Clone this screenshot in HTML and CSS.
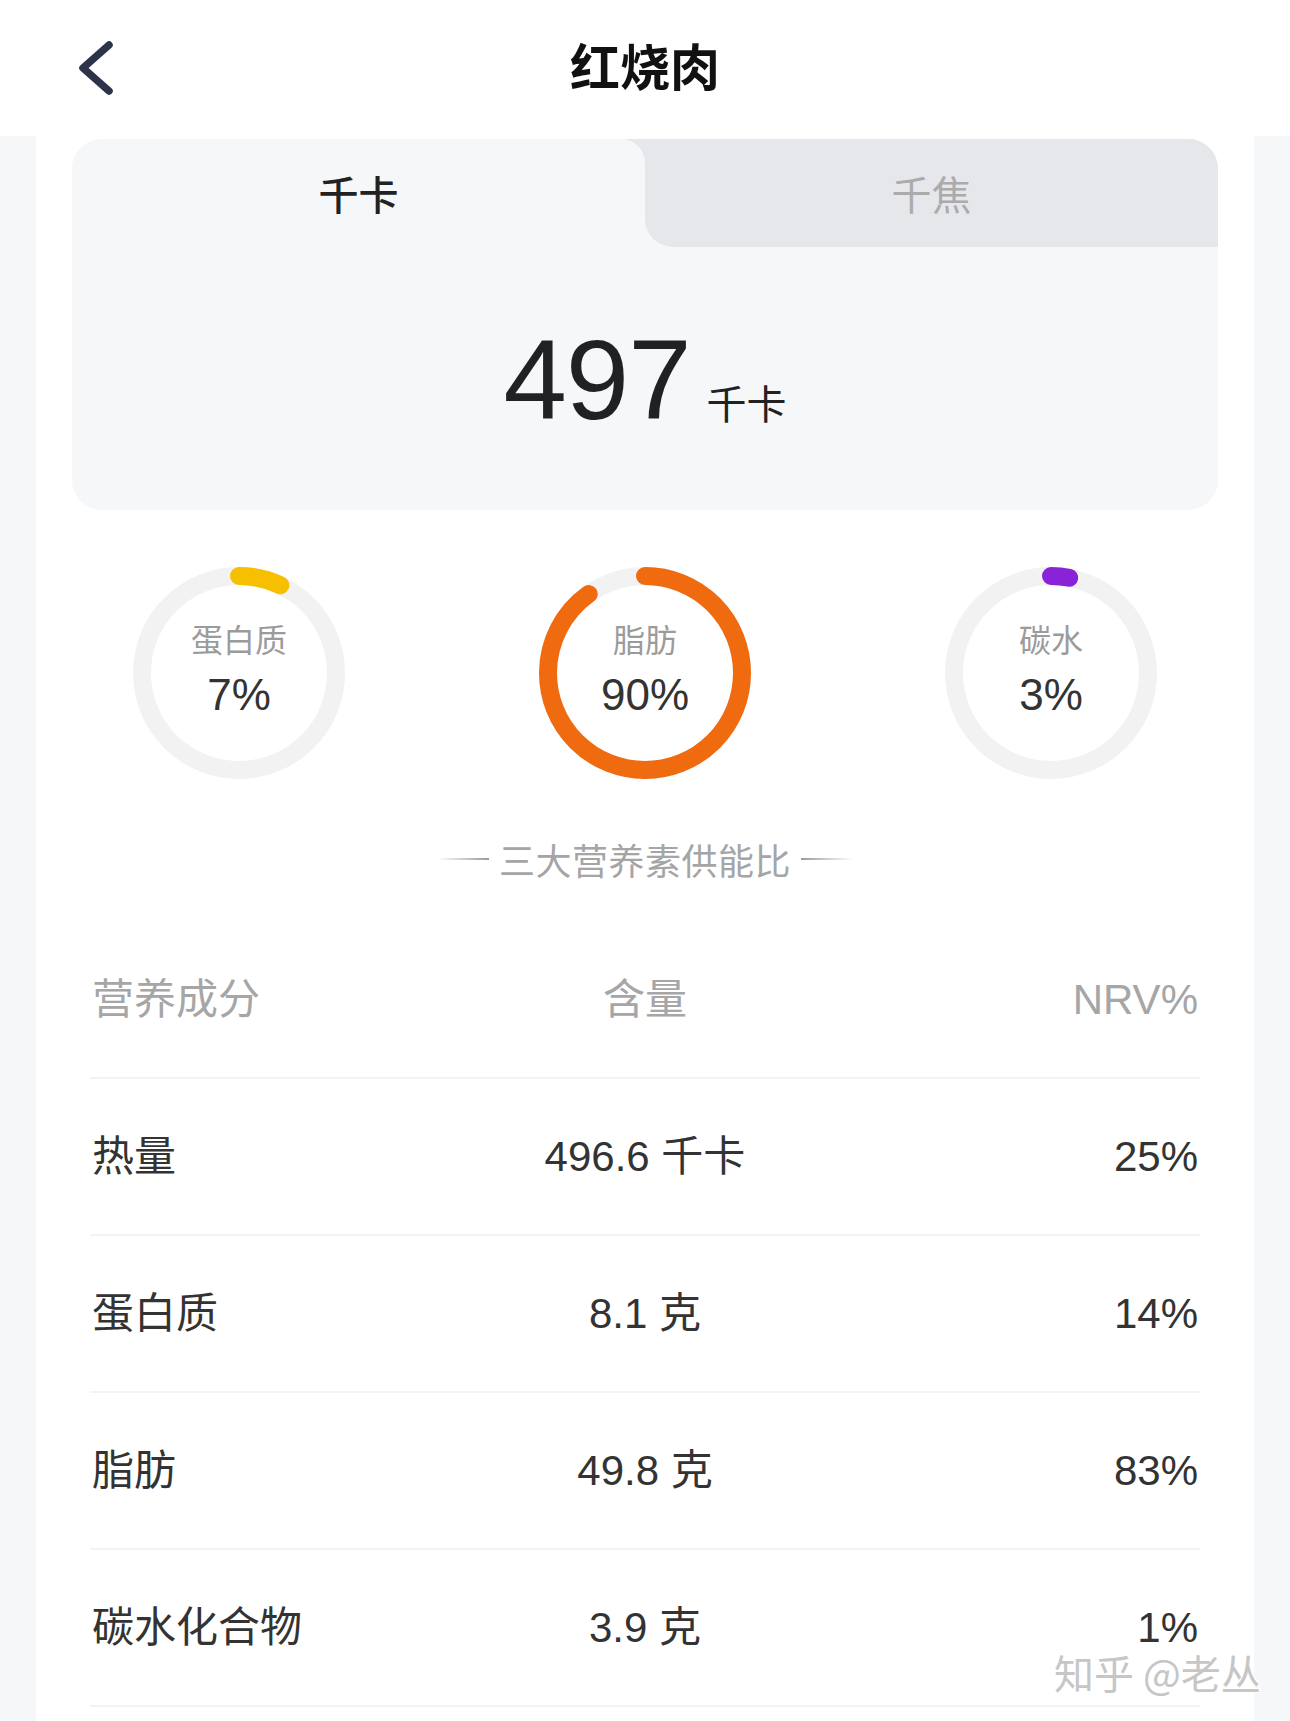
FILE: index.html
```html
<!DOCTYPE html>
<html lang="zh-CN">
<head>
<meta charset="utf-8">
<title>红烧肉</title>
<link rel="stylesheet" href="styles.css">
</head>
<body>
<header class="topbar">
  <div class="topbar-left">
    <svg class="back" width="40" height="60" viewBox="0 0 40 60" aria-hidden="true">
      <polyline points="33,7 7,30 33,53" fill="none" stroke="#2d3449" stroke-width="7.5" stroke-linecap="round" stroke-linejoin="round"/>
    </svg>
  </div>
  <h1 class="title">红烧肉</h1>
  <div class="topbar-right"></div>
</header>

<main class="card">
  <section class="energy">
    <div class="tabs">
      <div class="tab tab-active">千卡</div>
      <div class="tab tab-idle">千焦</div>
    </div>
    <div class="energy-value">
      <span class="big">497</span><span class="unit">千卡</span>
    </div>
  </section>

  <section class="rings">
    <div class="ring">
      <svg class="ring-svg" width="212" height="212" viewBox="0 0 212 212">
        <circle cx="106" cy="106" r="97" fill="none" stroke="#f2f2f2" stroke-width="18"/>
        <circle cx="106" cy="106" r="97" fill="none" stroke="#f6c000" stroke-width="18" stroke-linecap="round" stroke-dasharray="42.7 609.5" transform="rotate(-90 106 106)"/>
      </svg>
      <div class="ring-text">
        <span class="ring-label">蛋白质</span>
        <span class="ring-pct">7%</span>
      </div>
    </div>
    <div class="ring">
      <svg class="ring-svg" width="212" height="212" viewBox="0 0 212 212">
        <circle cx="106" cy="106" r="97" fill="none" stroke="#f2f2f2" stroke-width="18"/>
        <circle cx="106" cy="106" r="97" fill="none" stroke="#f06a10" stroke-width="18" stroke-linecap="round" stroke-dasharray="548.5 609.5" transform="rotate(-90 106 106)"/>
      </svg>
      <div class="ring-text">
        <span class="ring-label">脂肪</span>
        <span class="ring-pct">90%</span>
      </div>
    </div>
    <div class="ring">
      <svg class="ring-svg" width="212" height="212" viewBox="0 0 212 212">
        <circle cx="106" cy="106" r="97" fill="none" stroke="#f2f2f2" stroke-width="18"/>
        <circle cx="106" cy="106" r="97" fill="none" stroke="#8a22d8" stroke-width="18" stroke-linecap="round" stroke-dasharray="18.3 609.5" transform="rotate(-90 106 106)"/>
      </svg>
      <div class="ring-text">
        <span class="ring-label">碳水</span>
        <span class="ring-pct">3%</span>
      </div>
    </div>
  </section>

  <div class="caption">
    <span class="cap-line cap-left"></span>
    <span class="cap-text">三大营养素供能比</span>
    <span class="cap-line cap-right"></span>
  </div>

  <section class="table">
    <div class="row row-head">
      <span class="c1">营养成分</span><span class="c2">含量</span><span class="c3">NRV%</span>
    </div>
    <div class="row">
      <span class="c1">热量</span><span class="c2">496.6 千卡</span><span class="c3">25%</span>
    </div>
    <div class="row">
      <span class="c1">蛋白质</span><span class="c2">8.1 克</span><span class="c3">14%</span>
    </div>
    <div class="row">
      <span class="c1">脂肪</span><span class="c2">49.8 克</span><span class="c3">83%</span>
    </div>
    <div class="row">
      <span class="c1">碳水化合物</span><span class="c2">3.9 克</span><span class="c3">1%</span>
    </div>
  </section>
</main>

<div class="watermark">知乎 @老丛</div>
</body>
</html>
```

FILE: styles.css
```css
* { box-sizing: border-box; }

html, body {
  margin: 0;
  padding: 0;
}

body {
  background: #f6f7f9;
  font-family: "Liberation Sans", "Noto Sans CJK SC", sans-serif;
  color: #333;
  position: relative;
  min-height: 1721px;
  overflow: hidden;
}

.topbar {
  height: 136px;
  background: #fff;
  display: grid;
  grid-template-columns: 1fr auto 1fr;
  align-items: center;
}

.topbar-left {
  padding-left: 76px;
  display: flex;
  align-items: center;
}

.back { display: block; }

.title {
  margin: 0 0 8px;
  font-size: 50px;
  font-weight: 700;
  color: #111;
  line-height: 60px;
  font-family: "Noto Sans CJK SC", sans-serif;
}

.card {
  margin: 0 36px;
  background: #fff;
  padding: 3px 0 20px;
  min-height: 1585px;
}

.energy {
  margin: 0 36px;
  height: 371px;
  border-radius: 30px;
  background: #f6f7f9;
  overflow: hidden;
  display: flex;
  flex-direction: column;
}

.tabs {
  height: 108px;
  display: flex;
  background: linear-gradient(to right, transparent calc(50% - 30px), #e6e7eb calc(50% - 30px)) no-repeat;
  background-size: 100% 30px;
}

.tab {
  flex: 1;
  display: flex;
  align-items: center;
  justify-content: center;
  font-size: 40px;
  font-family: "Noto Sans CJK SC", sans-serif;
}

.tab-active {
  background: #f6f7f9;
  color: #222;
  font-weight: 500;
  border-top-right-radius: 24px;
}

.tab-idle {
  background: #e6e7eb;
  color: #ababab;
  border-bottom-left-radius: 28px;
}

.energy-value {
  flex: 1;
  display: flex;
  align-items: baseline;
  justify-content: center;
  line-height: 1;
  margin-top: 76px;
}

.big {
  font-size: 114px;
  color: #1f2224;
  letter-spacing: -1px;
}

.unit {
  font-size: 40px;
  color: #222;
  margin-left: 16px;
  font-family: "Noto Sans CJK SC", sans-serif;
}

.rings {
  display: grid;
  grid-template-columns: repeat(3, 1fr);
  margin-top: 57px;
}

.ring {
  display: grid;
  justify-items: center;
  align-items: center;
}

.ring-svg {
  grid-area: 1 / 1;
  display: block;
}

.ring-text {
  grid-area: 1 / 1;
  display: flex;
  flex-direction: column;
  align-items: center;
  padding-bottom: 8px;
}

.ring-label {
  font-size: 32px;
  line-height: 40px;
  color: #9b9b9b;
  font-family: "Noto Sans CJK SC", sans-serif;
}

.ring-pct {
  font-size: 44px;
  line-height: 50px;
  color: #333;
  margin-top: 12px;
}

.caption {
  margin-top: 60px;
  display: flex;
  align-items: center;
  justify-content: center;
  height: 40px;
}

.cap-text {
  font-size: 36px;
  color: #a5a5a5;
  line-height: 40px;
  margin: 0 10px;
  letter-spacing: 0.5px;
  font-family: "Noto Sans CJK SC", sans-serif;
}

.cap-line {
  width: 52px;
  height: 2px;
}

.cap-left { background: linear-gradient(to right, rgba(160,160,160,0), #9a9a9a); }
.cap-right { background: linear-gradient(to left, rgba(160,160,160,0), #9a9a9a); }

.table {
  margin: 43px 54px 0;
}

.row {
  display: grid;
  grid-template-columns: 1fr 1fr 1fr;
  align-items: center;
  height: 157px;
  border-bottom: 2px solid #f3f3f3;
  font-size: 42px;
  line-height: 48px;
  color: #333;
  padding: 0 2px;
}

.row-head { color: #a6a6a6; }

.c1 { text-align: left; }
.c2 { text-align: center; white-space: nowrap; }
.c3 { text-align: right; }

.watermark {
  position: absolute;
  left: 1054px;
  top: 1654px;
  font-size: 40px;
  line-height: 36px;
  color: #c6c6c6;
  white-space: nowrap;
  text-shadow: 1px 1px 0 #fff, -1px -1px 0 #fff, 1px -1px 0 #fff, -1px 1px 0 #fff;
  font-family: "Noto Sans CJK SC", sans-serif;
}
```
